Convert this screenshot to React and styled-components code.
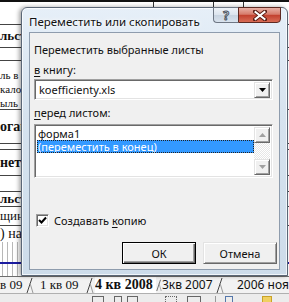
import React from "react";
import styled, { createGlobalStyle } from "styled-components";

const GlobalStyle = createGlobalStyle`
  html, body { margin: 0; padding: 0; background: #fff; }
  body { width: 289px; height: 302px; overflow: hidden; }
`;

const UI = `"Noto Sans", "DejaVu Sans", sans-serif`;
const SERIF = `"Liberation Serif", "DejaVu Serif", serif`;

const Screen = styled.div`
  position: relative;
  width: 289px;
  height: 302px;
  overflow: hidden;
  background: #fff;
  display: flex;
  flex-direction: column;
`;

const Sheet = styled.div`
  height: 276px;
  display: flex;
  flex-direction: column;
  border-top: 2px solid #111;
  box-sizing: border-box;
`;

const TopRow = styled.div`
  height: 5px;
  display: grid;
  grid-template-columns: 154px 60px 30px 1fr;
`;

const TopCell = styled.div`
  border-right: 1px solid #333;
`;

const Row = styled.div`
  flex: none;
  height: ${(p) => p.$h}px;
  border-bottom: ${(p) => (p.$line ? "1px solid #444" : "none")};
  display: flex;
  align-items: center;
  font-family: ${SERIF};
  font-size: ${(p) => p.$size || 12}px;
  font-weight: ${(p) => (p.$bold ? 700 : 400)};
  color: #111;
  white-space: nowrap;
  overflow: hidden;
  box-sizing: border-box;
`;

const ChartRow = styled.div`
  flex: 1;
  background: repeating-linear-gradient(
    to right,
    transparent 0 2px,
    #b8b8b8 2px 3px,
    transparent 3px 5px
  );
  display: flex;
  flex-direction: column;
  justify-content: flex-end;
  padding-bottom: 12px;
  box-sizing: border-box;
`;

const ChartLine = styled.div`
  height: 2px;
  background: #1c1ca0;
`;

const TabsBar = styled.div`
  height: 16px;
  display: flex;
  align-items: center;
  background: #f2f2f2;
  border-top: 1px solid #6d6d6d;
  border-bottom: 1px solid #b0b0b0;
  white-space: nowrap;
  overflow: hidden;
`;

const Tab = styled.span`
  flex: none;
  width: ${(p) => (p.$w ? `${p.$w}px` : "auto")};
  box-sizing: border-box;
  padding-left: ${(p) => p.$pl || 0}px;
  font-family: ${(p) => (p.$serif ? SERIF : UI)};
  font-size: ${(p) => (p.$active ? 14 : p.$serif ? 13 : 12)}px;
  font-weight: ${(p) => (p.$active ? 700 : 400)};
  color: #111;
  background: ${(p) => (p.$active ? "#fff" : "transparent")};
  line-height: 16px;
  overflow: hidden;
`;

const SepBox = styled.span`
  flex: none;
  width: ${(p) => p.$w}px;
  height: 16px;
  display: flex;
  justify-content: center;
`;

const TabSep = ({ w = 10 }) => (
  <SepBox $w={w}>
    <svg width="8" height="16" viewBox="0 0 8 16">
      <path d="M1 16 L6 1" stroke="#444" strokeWidth="1" fill="none" />
      <path d="M4 6 L7 16" stroke="#999" strokeWidth="1" fill="none" />
    </svg>
  </SepBox>
);

const Toolbar = styled.div`
  flex: 1;
  background: #ececec;
  display: flex;
  align-items: flex-end;
`;

const ToolIcon = styled.div`
  flex: none;
  margin-left: ${(p) => p.$ml}px;
  width: ${(p) => p.$w || 10}px;
  height: 5px;
  border: 1px ${(p) => (p.$dotted ? "dotted" : "solid")} ${(p) => p.$c || "#666"};
  border-bottom: none;
  background: ${(p) => p.$bg || "transparent"};
`;

const ToolSep = styled.div`
  flex: none;
  margin-left: ${(p) => p.$ml}px;
  width: 1px;
  height: 6px;
  background: #999;
`;

/* ---------- dialog window ---------- */

const Window = styled.div`
  position: absolute;
  left: 21px;
  top: 7px;
  width: 267px;
  height: 269px;
  box-sizing: border-box;
  border: 1px solid #5a6676;
  border-radius: 6px 6px 0 0;
  background: linear-gradient(to bottom, #e6eff8 0%, #d6e3ef 40%, #cddcea 100%);
  box-shadow: -2px 0 4px rgba(0, 0, 0, 0.35), inset 0 0 0 1px rgba(255, 255, 255, 0.7);
  display: flex;
  flex-direction: column;
  padding: 0 7px 5px 7px;
`;

const TitleBar = styled.div`
  height: 24px;
  display: flex;
  align-items: flex-start;
`;

const Title = styled.div`
  font-family: ${UI};
  font-size: 11.5px;
  color: #111;
  padding-top: 6px;
  text-shadow: 0 0 6px #fff, 0 0 3px #fff;
  white-space: nowrap;
`;

const Caption = styled.div`
  margin-left: auto;
  margin-right: -1px;
  margin-top: -1px;
  display: flex;
`;

const HelpBtn = styled.div`
  width: 25px;
  height: 16px;
  box-sizing: border-box;
  border: 1px solid #6e7784;
  border-right: none;
  border-radius: 0 0 0 4px;
  background: linear-gradient(to bottom, #eef3f8 0%, #dbe4ee 50%, #c7d3e0 51%, #d9e3ee 100%);
  display: flex;
  justify-content: center;
  align-items: center;
  font-family: ${UI};
  font-weight: 700;
  font-size: 12px;
  color: #fff;
  -webkit-text-stroke: 1px #4b5561;
`;

const CloseBtn = styled.div`
  width: 43px;
  height: 16px;
  box-sizing: border-box;
  border: 1px solid #5d2a22;
  border-radius: 0 0 4px 0;
  background: linear-gradient(to bottom, #e8b1a6 0%, #d77b6b 45%, #c2412f 52%, #d86c55 100%);
  display: flex;
  justify-content: center;
  align-items: center;
`;

const Client = styled.div`
  flex: 1;
  background: #f0f0f0;
  border: 1px solid #8e9cad;
  display: flex;
  flex-direction: column;
  padding-left: 4px;
  font-family: ${UI};
  font-size: 11px;
  color: #111;
`;

const Label = styled.div`
  height: 14px;
  line-height: 14px;
  margin-top: ${(p) => p.$mt}px;
  white-space: nowrap;
`;

const Key = styled.span`
  text-decoration: underline;
  text-underline-offset: 2px;
`;

const Sunken = styled.div`
  width: 239px;
  box-sizing: border-box;
  background: #fff;
  border-style: solid;
  border-width: 1px;
  border-color: #a0a0a0 #fff #fff #a0a0a0;
  box-shadow: inset 1px 1px 0 #696969, inset -1px -1px 0 #e3e3e3;
`;

const Combo = styled(Sunken)`
  height: 21px;
  margin-top: ${(p) => p.$mt}px;
  display: flex;
  align-items: center;
  padding: 2px 2px 2px 4px;
`;

const ComboText = styled.span`
  flex: 1;
`;

const Raised = styled.div`
  box-sizing: border-box;
  background: #f0f0f0;
  border-style: solid;
  border-width: 1px;
  border-color: #e3e3e3 #696969 #696969 #e3e3e3;
  box-shadow: inset 1px 1px 0 #fff, inset -1px -1px 0 #a0a0a0;
  display: flex;
  justify-content: center;
  align-items: center;
`;

const ArrowBtn = styled(Raised)`
  width: 16px;
  height: 16px;
`;

const List = styled(Sunken)`
  height: 54px;
  margin-top: ${(p) => p.$mt}px;
  display: flex;
  padding: 2px;
`;

const Items = styled.div`
  flex: 1;
  display: flex;
  flex-direction: column;
`;

const Item = styled.div`
  height: 13px;
  line-height: 13px;
  padding-left: 1px;
  white-space: nowrap;
  background: ${(p) => (p.$selected ? "#3399ff" : "transparent")};
  color: ${(p) => (p.$selected ? "#fff" : "#111")};
  outline: ${(p) => (p.$selected ? "1px dotted #222" : "none")};
  outline-offset: -1px;
`;

const ScrollBar = styled.div`
  width: 16px;
  display: flex;
  flex-direction: column;
  justify-content: space-between;
  background: repeating-conic-gradient(#fff 0 25%, #e6e6e6 0 50%) 0 0 / 2px 2px;
`;

const CheckRow = styled.div`
  margin-top: 35px;
  display: flex;
  align-items: center;
  gap: 5px;
  padding-left: 2px;
  height: 14px;
`;

const CheckBox = styled(Sunken)`
  width: 13px;
  height: 13px;
  display: flex;
  justify-content: center;
  align-items: center;
`;

const Buttons = styled.div`
  margin-top: 15px;
  display: flex;
  gap: 7px;
  padding-left: 88px;
`;

const Button = styled(Raised)`
  width: 74px;
  height: 22px;
  font-family: ${UI};
  font-size: 11px;
  color: #111;
  ${(p) =>
    p.$default &&
    `border-color: #000; box-shadow: inset 1px 1px 0 #fff, inset -1px -1px 0 #696969, inset -2px -2px 0 #a0a0a0;`}
`;

const Tri = ({ up, color = "#000" }) => (
  <svg width="7" height="4" viewBox="0 0 7 4">
    <path d={up ? "M0 4 L3.5 0 L7 4 Z" : "M0 0 L7 0 L3.5 4 Z"} fill={color} />
  </svg>
);

const leftRows = [
  { h: 18, text: "", line: true },
  { h: 23, text: "льства", size: 13, bold: true, line: true },
  { h: 13, text: "", line: true },
  { h: 7, text: "" },
  { h: 14, text: "ль в ", size: 11 },
  { h: 14, text: "калогов", size: 11 },
  { h: 14, text: "ыль", size: 11, line: true },
  { h: 34, text: "огама", size: 14, bold: true, line: true },
  { h: 6, text: "", line: true },
  { h: 26, text: "нетные", size: 14, bold: true, line: true },
  { h: 16, text: "", line: true },
  { h: 15, text: "льства", size: 13, bold: true, line: true },
  { h: 19, text: "щины", size: 13, line: true },
  { h: 16, text: ") на", size: 14 },
];

export default function App() {
  return (
    <Screen>
      <GlobalStyle />
      <Sheet>
        <TopRow>
          <TopCell />
          <TopCell />
          <TopCell />
          <div />
        </TopRow>
        {leftRows.map((r, i) => (
          <Row key={i} $h={r.h} $line={r.line} $size={r.size} $bold={r.bold}>
            {r.text}
          </Row>
        ))}
        <ChartRow>
          <ChartLine />
        </ChartRow>
      </Sheet>
      <TabsBar>
        <Tab $serif $w={25}>в 09</Tab>
        <TabSep w={10} />
        <Tab $serif $w={50} $pl={5}>1 кв 09</Tab>
        <TabSep w={10} />
        <Tab $serif $active $w={61}>4 кв 2008</Tab>
        <TabSep w={6} />
        <Tab $w={52}>3кв 2007</Tab>
        <TabSep w={12} />
        <Tab $pl={11}>2006 нояб</Tab>
      </TabsBar>
      <Toolbar>
        <ToolIcon $ml={92} $w={10} />
        <ToolIcon $ml={10} $w={6} />
        <ToolIcon $ml={5} $w={9} />
        <ToolIcon $ml={27} $w={10} $dotted />
        <ToolIcon $ml={10} $w={12} />
        <ToolSep $ml={14} />
        <ToolIcon $ml={9} $w={6} $c="#5577aa" />
        <ToolIcon $ml={29} $w={8} $c="#c9a227" $bg="#f0d060" />
      </Toolbar>

      <Window>
        <TitleBar>
          <Title>Переместить или скопировать</Title>
          <Caption>
            <HelpBtn>?</HelpBtn>
            <CloseBtn>
              <svg width="14" height="11" viewBox="0 0 14 11">
                <path d="M2 1.5 L12 9.5 M12 1.5 L2 9.5" stroke="#5a1d14" strokeWidth="4" strokeLinecap="square" />
                <path d="M2.5 2 L11.5 9 M11.5 2 L2.5 9" stroke="#fff" strokeWidth="2" strokeLinecap="square" />
              </svg>
            </CloseBtn>
          </Caption>
        </TitleBar>
        <Client>
          <Label $mt={10}>Переместить выбранные листы</Label>
          <Label $mt={6}>
            <Key>в</Key> книгу:
          </Label>
          <Combo $mt={2}>
            <ComboText>koefficienty.xls</ComboText>
            <ArrowBtn>
              <Tri />
            </ArrowBtn>
          </Combo>
          <Label $mt={6}>
            <Key>п</Key>еред листом:
          </Label>
          <List $mt={4}>
            <Items>
              <Item>форма1</Item>
              <Item $selected>(переместить в конец)</Item>
            </Items>
            <ScrollBar>
              <ArrowBtn>
                <Tri up color="#a0a0a0" />
              </ArrowBtn>
              <ArrowBtn>
                <Tri color="#a0a0a0" />
              </ArrowBtn>
            </ScrollBar>
          </List>
          <CheckRow>
            <CheckBox>
              <svg width="9" height="9" viewBox="0 0 9 9">
                <path d="M1 4 L3.5 6.5 L8 1.5" stroke="#000" strokeWidth="2" fill="none" />
              </svg>
            </CheckBox>
            <span>
              Создавать <Key>к</Key>опию
            </span>
          </CheckRow>
          <Buttons>
            <Button $default>ОК</Button>
            <Button>Отмена</Button>
          </Buttons>
        </Client>
      </Window>
    </Screen>
  );
}
